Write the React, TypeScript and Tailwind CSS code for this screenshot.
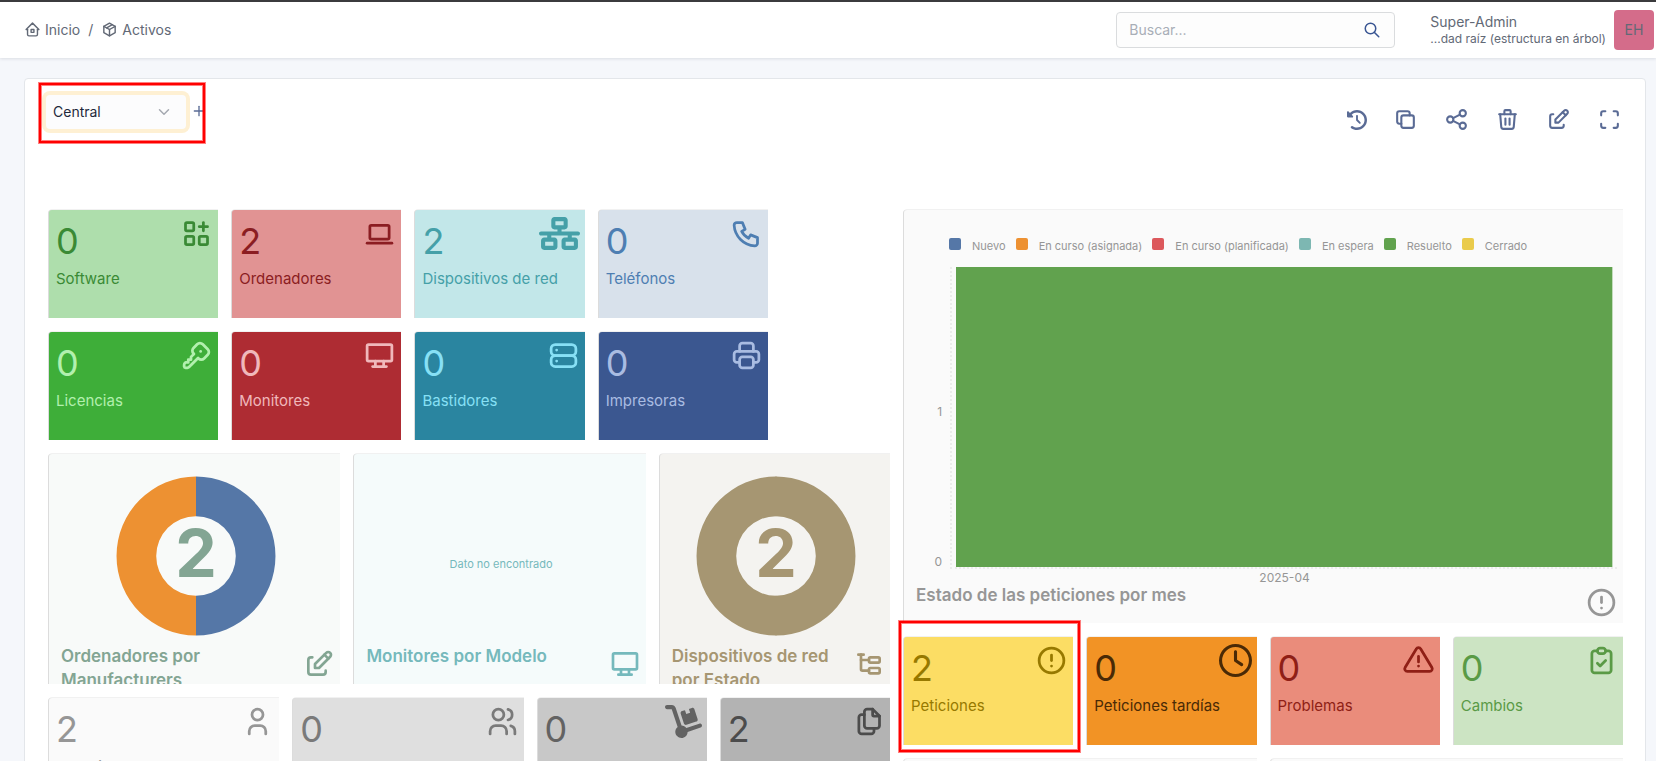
import type { ReactNode } from 'react';
import type { IconType } from 'react-icons';
import {
  TbAlertCircle,
  TbAlertTriangle,
  TbApps,
  TbChevronDown,
  TbClipboardCheck,
  TbDeviceDesktop,
  TbDeviceLaptop,
  TbEdit,
  TbFiles,
  TbHome2,
  TbKey,
  TbMaximize,
  TbPackage,
  TbPhone,
  TbPlus,
  TbPrinter,
  TbSearch,
  TbServer,
  TbShare,
  TbSubtask,
  TbTrash,
  TbUser,
  TbUsers,
} from 'react-icons/tb';
import { FaClockRotateLeft, FaDolly, FaNetworkWired, FaRegClock } from 'react-icons/fa6';

const widget =
  'h-full overflow-hidden rounded-tl-[3px] shadow-[-1px_0_0_#dcdcdc,0_-1px_0_#f1f1f1]';

function Highlight({ place }: { place: string }) {
  return (
    <div
      aria-hidden="true"
      className={`pointer-events-none absolute z-10 border-2 border-[#ff0000] shadow-[0_0_0_1px_rgba(255,0,0,0.5),inset_0_0_0_1px_rgba(255,0,0,0.5)] ${place}`}
    />
  );
}

interface CountProps {
  value: number;
  label: string;
  icon: IconType;
  iconWidth?: string;
  colors: string;
  place: string;
  marked?: boolean;
}

function CountCard({
  value,
  label,
  icon: Icon,
  iconWidth = 'w-[33px]',
  colors,
  place,
  marked,
}: CountProps) {
  return (
    <div className={`relative ${place}`}>
      <a href="#" className={`block pt-[7px] pr-[5px] pl-[7px] ${widget} ${colors}`}>
        <div className="flex h-8 items-center justify-between">
          <span className="pt-4 text-4xl leading-12">{value}</span>
          <Icon className={`h-[33px] shrink-0 ${iconWidth}`} />
        </div>
        <div className="mt-[18px] text-[15px] leading-6">{label}</div>
      </a>
      {marked && <Highlight place="-top-4 -right-[7px] -bottom-[7px] -left-[5px]" />}
    </div>
  );
}

interface PanelProps {
  title: string;
  icon: IconType;
  colors: string;
  place: string;
  children: ReactNode;
}

function DonutPanel({ title, icon: Icon, colors, place, children }: PanelProps) {
  return (
    <section className={`${place} ${widget} ${colors}`}>
      <div className="flex h-[190px] items-center justify-center pt-[22px] pb-2 pl-0.5">
        {children}
      </div>
      <div className="flex items-start justify-between gap-3 pr-[5px] pl-3">
        <h2 className="text-[17px] leading-6 font-semibold">{title}</h2>
        <Icon className="mt-1 h-8 w-8 shrink-0" />
      </div>
    </section>
  );
}

function Donut({ left, right, value }: { left: string; right: string; value: number }) {
  return (
    <svg viewBox="0 0 160 160" className="h-40 w-40" role="img" aria-label={String(value)}>
      <path d="M80 0.5a79.5 79.5 0 0 1 0 159v-39.7a39.8 39.8 0 0 0 0-79.6z" fill={right} />
      <path d="M80 0.5a79.5 79.5 0 0 0 0 159v-39.7a39.8 39.8 0 0 1 0-79.6z" fill={left} />
      {left === right && <path d="M80 0.5v39.7M80 119.8v39.7" stroke={left} />}
      <text x="80" y="101" textAnchor="middle" fontSize="66" fontWeight="700" fill="currentColor">
        {value}
      </text>
    </svg>
  );
}

const legend = [
  { name: 'Nuevo', color: 'bg-[#5577a7]' },
  { name: 'En curso (asignada)', color: 'bg-[#ed9132]' },
  { name: 'En curso (planificada)', color: 'bg-[#dc585c]' },
  { name: 'En espera', color: 'bg-[#7db7b2]' },
  { name: 'Resuelto', color: 'bg-[#61a24e]' },
  { name: 'Cerrado', color: 'bg-[#eacb4b]' },
];

function StatusChart() {
  return (
    <section
      className={`col-span-12 col-start-15 row-span-7 row-start-1 flex flex-col bg-[#fafafa] text-[#969696] ${widget}`}
    >
      <ul className="flex gap-2.5 pt-7 pl-[45px] text-[11px] leading-4">
        {legend.map((item) => (
          <li key={item.name} className="flex items-start gap-[11px] whitespace-nowrap">
            <span className={`h-3 w-3 rounded-xs ${item.color}`} />
            {item.name}
          </li>
        ))}
      </ul>
      <div className="mt-[13px] flex items-start pr-1.5">
        <div className="flex h-[303px] w-[46px] flex-col items-end justify-end pr-2 text-xs leading-4">
          <span className="mb-[134px]">1</span>
          <span>0</span>
        </div>
        <div className="h-[302px] min-w-0 flex-1 border-b-2 border-l-2 border-dotted border-[#ececec] pr-1 pl-1">
          <div className="h-full border-r border-solid border-[#c3dcbc] bg-[#61a24e]" />
        </div>
      </div>
      <div className="ml-[46px] pr-1 text-center text-xs leading-4">2025-04</div>
      <div className="-mt-[3px] flex items-start justify-between pr-[5px] pl-3">
        <h2 className="text-[17px] leading-6 font-semibold">Estado de las peticiones por mes</h2>
        <TbAlertCircle className="mt-[3px] h-[33px] w-[33px]" />
      </div>
    </section>
  );
}

function CopyIcon({ className }: { className?: string }) {
  return (
    <svg
      viewBox="0 0 24 24"
      className={className}
      fill="none"
      stroke="currentColor"
      strokeWidth="2"
      strokeLinecap="round"
      strokeLinejoin="round"
    >
      <rect x="8" y="8" width="12" height="12" rx="2" />
      <path d="M16 8v-2a2 2 0 0 0 -2 -2h-8a2 2 0 0 0 -2 2v8a2 2 0 0 0 2 2h2" />
    </svg>
  );
}

const actions = [
  { label: 'Actualización automática', icon: FaClockRotateLeft, size: 'h-5 w-5' },
  { label: 'Clonar', icon: CopyIcon, size: 'h-[25px] w-[25px]' },
  { label: 'Compartir', icon: TbShare, size: 'h-[25px] w-[25px]' },
  { label: 'Eliminar', icon: TbTrash, size: 'h-[25px] w-[25px]' },
  { label: 'Editar', icon: TbEdit, size: 'h-[25px] w-[25px]' },
  { label: 'Pantalla completa', icon: TbMaximize, size: 'h-[25px] w-[25px]' },
];

function Header() {
  return (
    <header className="z-10 flex h-[58px] shrink-0 items-center border-t-2 border-[#3b3b3d] bg-white pr-0.5 pl-6 text-sm text-[#626976] shadow-[0_1px_3px_rgba(30,41,59,0.12)]">
      <nav className="flex items-center">
        <a href="#" className="flex items-center gap-1">
          <TbHome2 className="mb-0.5 h-[17px] w-[17px]" />
          Inicio
        </a>
        <span className="mx-2">/</span>
        <a href="#" className="flex items-center gap-1">
          <TbPackage className="mb-0.5 h-[17px] w-[17px]" />
          Activos
        </a>
      </nav>
      <form className="mr-[35px] ml-auto flex h-9 w-[279px] items-center rounded-sm border border-[#dadcde] bg-[#fdfdfd] pr-[13px] pl-3">
        <input
          type="text"
          aria-label="Buscar"
          placeholder="Buscar..."
          className="min-w-0 flex-1 bg-transparent outline-none placeholder:text-[#a8aeb7]"
        />
        <button type="button" aria-label="Buscar" className="text-[#3a5693]">
          <TbSearch className="h-[18px] w-[18px]" />
        </button>
      </form>
      <div className="mr-2">
        <div className="leading-[18px]">Super-Admin</div>
        <div className="text-xs leading-4">...dad raíz (estructura en árbol)</div>
      </div>
      <button type="button" className="h-10 w-10 rounded-sm bg-[#d46c8a]">
        EH
      </button>
    </header>
  );
}

export default function App() {
  return (
    <div className="flex h-screen flex-col overflow-hidden bg-[#f5f7fb] font-[Inter,sans-serif]">
      <Header />
      <main className="min-h-0 flex-1 overflow-y-auto pt-5 pr-2.5 pl-6 [scrollbar-width:none]">
        <div className="rounded-sm border border-[#e3e6ea] bg-white pr-[22px] pb-6 pl-6">
          <div className="-ml-[3px] flex h-[131px] items-start justify-between pt-4">
            <div className="relative flex items-center gap-[5px]">
              <div className="relative">
                <select
                  aria-label="Cuadro de mando"
                  className="h-[34px] w-[140px] appearance-none rounded-sm bg-[#fcfcfd] pl-[7px] text-sm text-[#1e293b] ring-4 ring-[#fef0d3] outline-none"
                >
                  <option>Central</option>
                </select>
                <TbChevronDown className="pointer-events-none absolute top-2 right-[13px] h-[18px] w-[18px] text-[#a5a9b1]" />
              </div>
              <button type="button" aria-label="Añadir" className="-mt-0.5 text-[#5a6b95]">
                <TbPlus className="h-4 w-4" />
              </button>
              <Highlight place="-top-3 -left-[7px] h-[60px] w-[166px]" />
            </div>
            <div className="flex items-center gap-[26px] pt-3 pr-px text-[#5a6b95]">
              {actions.map(({ label, icon: Icon, size }) => (
                <button key={label} type="button" aria-label={label}>
                  <Icon className={size} />
                </button>
              ))}
            </div>
          </div>
          <div className="grid auto-rows-[47px] grid-cols-[repeat(26,minmax(0,1fr))] gap-[14px]">
            <CountCard value={0} label="Software" icon={TbApps} colors="bg-[#aedeac] text-[#3a8a35]" place="col-span-3 col-start-1 row-span-2 row-start-1" />
            <CountCard value={2} label="Ordenadores" icon={TbDeviceLaptop} colors="bg-[#e19393] text-[#8b1d22]" place="col-span-3 col-start-4 row-span-2 row-start-1" />
            <CountCard value={2} label="Dispositivos de red" icon={FaNetworkWired} iconWidth="w-[41px]" colors="bg-[#c2e7e9] text-[#45a0a8]" place="col-span-3 col-start-7 row-span-2 row-start-1" />
            <CountCard value={0} label="Teléfonos" icon={TbPhone} colors="bg-[#d8e1eb] text-[#4e7eb2]" place="col-span-3 col-start-10 row-span-2 row-start-1" />
            <CountCard value={0} label="Licencias" icon={TbKey} colors="bg-[#3eae39] text-[#b2f0ae]" place="col-span-3 col-start-1 row-span-2 row-start-3" />
            <CountCard value={0} label="Monitores" icon={TbDeviceDesktop} colors="bg-[#ae2c33] text-[#f0b8bb]" place="col-span-3 col-start-4 row-span-2 row-start-3" />
            <CountCard value={0} label="Bastidores" icon={TbServer} colors="bg-[#2a85a0] text-[#87e0f5]" place="col-span-3 col-start-7 row-span-2 row-start-3" />
            <CountCard value={0} label="Impresoras" icon={TbPrinter} colors="bg-[#3b5790] text-[#a9bce2]" place="col-span-3 col-start-10 row-span-2 row-start-3" />

            <DonutPanel title="Ordenadores por Manufacturers" icon={TbEdit} colors="bg-[#f8faf9] text-[#83a593]" place="col-span-5 col-start-1 row-span-4 row-start-5">
              <Donut left="#ed9132" right="#5577a7" value={2} />
            </DonutPanel>
            <DonutPanel title="Monitores por Modelo" icon={TbDeviceDesktop} colors="bg-[#f5fbfb] text-[#75b9bc]" place="col-span-5 col-start-6 row-span-4 row-start-5">
              <span className="pt-4 text-[11px] leading-4">Dato no encontrado</span>
            </DonutPanel>
            <DonutPanel title="Dispositivos de red por Estado" icon={TbSubtask} colors="bg-[#f4f3f0] text-[#a69672]" place="col-span-4 col-start-11 row-span-4 row-start-5">
              <Donut left="#a69672" right="#a69672" value={2} />
            </DonutPanel>

            <CountCard value={2} label="Usuarios" icon={TbUser} colors="bg-[#fafafa] text-[#969696]" place="col-span-4 col-start-1 row-span-2 row-start-9" />
            <CountCard value={0} label="Grupos" icon={TbUsers} colors="bg-[#dfdfdf] text-[#7a7a7a]" place="col-span-4 col-start-5 row-span-2 row-start-9" />
            <CountCard value={0} label="Proveedores" icon={FaDolly} iconWidth="w-[37px]" colors="bg-[#c8c8c8] text-[#636363]" place="col-span-3 col-start-9 row-span-2 row-start-9" />
            <CountCard value={2} label="Documentos" icon={TbFiles} colors="bg-[#b3b3b3] text-[#4c4c4c]" place="col-span-3 col-start-12 row-span-2 row-start-9" />

            <StatusChart />
            <CountCard value={2} label="Peticiones" icon={TbAlertCircle} colors="bg-[#fcdd64] text-[#977900]" place="col-span-3 col-start-15 row-span-2 row-start-8" marked />
            <CountCard value={0} label="Peticiones tardías" icon={FaRegClock} colors="bg-[#f29325] text-[#4a2a06]" place="col-span-3 col-start-18 row-span-2 row-start-8" />
            <CountCard value={0} label="Problemas" icon={TbAlertTriangle} colors="bg-[#ea8c7b] text-[#8f1f16]" place="col-span-3 col-start-21 row-span-2 row-start-8" />
            <CountCard value={0} label="Cambios" icon={TbClipboardCheck} colors="bg-[#cce4c3] text-[#5a9a46]" place="col-span-3 col-start-24 row-span-2 row-start-8" />
            <div className={`col-span-6 col-start-15 row-start-10 bg-[#fafafa] ${widget}`} />
            <div className={`col-span-6 col-start-21 row-start-10 bg-[#fafafa] ${widget}`} />
          </div>
        </div>
      </main>
    </div>
  );
}
